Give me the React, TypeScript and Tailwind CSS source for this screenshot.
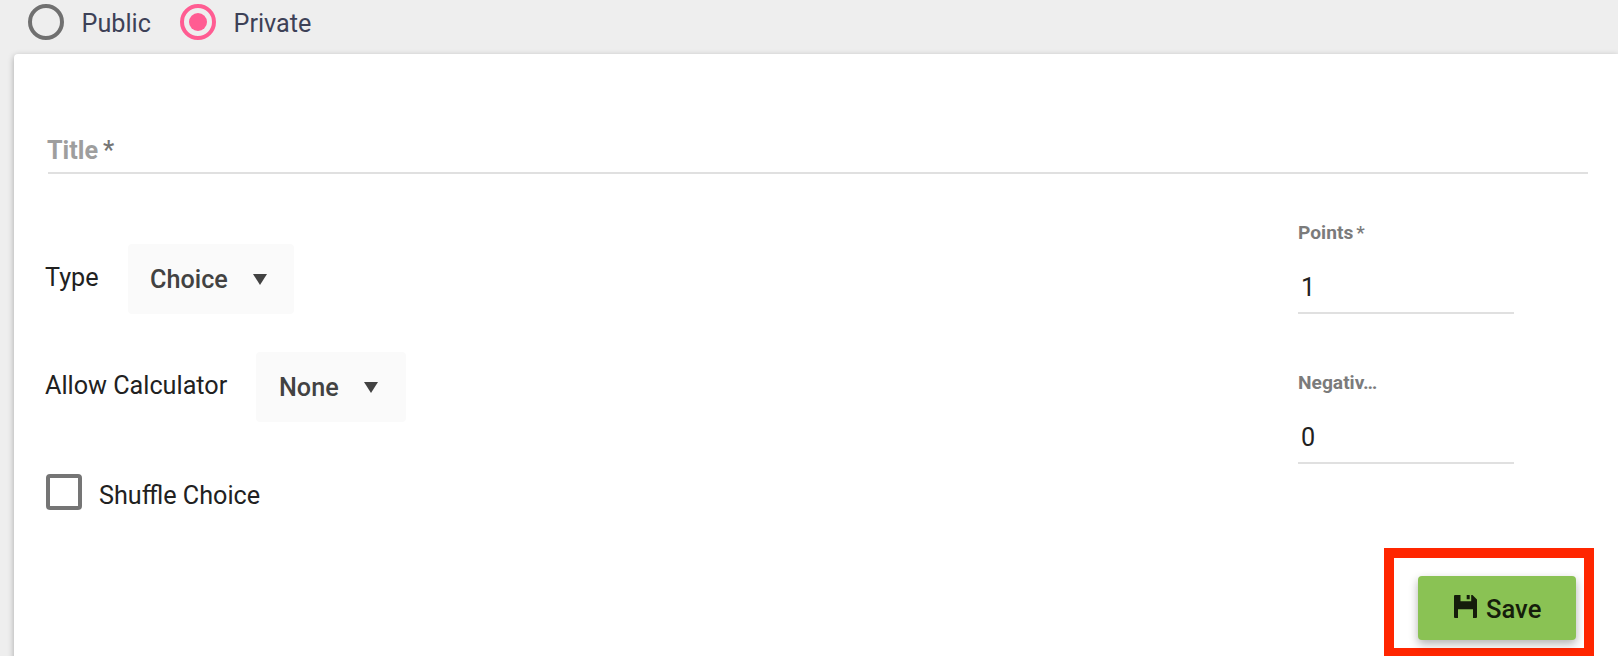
import type { ReactNode } from 'react';

const Radio = ({ label, checked }: { label: string; checked?: boolean }) => (
  <label className="flex items-center h-9">
    <span
      className={
        checked
          ? 'flex items-center justify-center size-9 rounded-full border-4 border-[#ff5c92]'
          : 'flex items-center justify-center size-9 rounded-full border-4 border-[#707070]'
      }
    >
      {checked && <span className="size-[18px] rounded-full bg-[#ff5c92]"></span>}
    </span>
    <span className="ml-[17.5px] pt-1 text-[#3d4157] leading-9">{label}</span>
  </label>
);

const Select = ({ value, className }: { value: string; className: string }) => (
  <button
    className={`flex items-center justify-between h-[70px] rounded-sm bg-[#fafafa] text-[#424242] font-medium ${className}`}
  >
    <span className="pt-0.5">{value}</span>
    <svg width="14" height="11" viewBox="0 0 14 11" fill="#424242">
      <path d="M0 0h14L7 11z" />
    </svg>
  </button>
);

const NumberField = ({ label, value }: { label: ReactNode; value: string }) => (
  <div className="w-[216px] h-[150px]">
    <div className="h-6 pt-px text-[19.2px] leading-6 font-bold text-[#7b7b7b]">{label}</div>
    <div className="h-[70px] pt-7 pl-[3px] leading-8 border-b-2 border-[#e0e0e0]">{value}</div>
  </div>
);

const QuestionForm = () => {
  return (
    <div className="w-[1618px] h-[656px] overflow-hidden bg-[#eeeeee] font-[Roboto,sans-serif] text-[25.2px] text-[#212121]">
      <div className="flex h-[54px] pt-1 pl-7">
        <div className="w-[152px]">
          <Radio label="Public" />
        </div>
        <Radio label="Private" checked />
      </div>
      <div className="ml-3.5 h-[660px] rounded-tl bg-white shadow-[0_2px_6px_rgba(0,0,0,0.3)]">
        <div className="ml-[34px] w-[1540px] h-[120px] pt-[81px] leading-8 font-bold text-[#9e9e9e] border-b-2 border-[#e0e0e0]">
          <span className="-ml-px">Title</span>
          <span className="ml-[5px] text-[#757575] font-medium">*</span>
        </div>
        <div className="flex justify-between h-[374px] pl-8">
          <div className="pt-[70px]">
            <div className="flex items-center h-[70px]">
              <span className="w-[82px] pb-[3px] -indent-px">Type</span>
              <Select value="Choice" className="w-[166px] pl-[22px] pr-[27px]" />
            </div>
            <div className="flex items-center h-[70px] mt-[38px]">
              <span className="w-[210px] pb-[3px] -indent-px">Allow Calculator</span>
              <Select value="None" className="w-[150px] pl-[23px] pr-7" />
            </div>
            <div className="flex mt-[52px]">
              <span className="size-9 rounded border-4 border-[#757575]"></span>
              <span className="ml-[17px] mt-1 leading-9">Shuffle Choice</span>
            </div>
          </div>
          <div className="pt-[46px] pr-[104px]">
            <NumberField
              label={
                <>
                  Points<span className="ml-[3px] font-medium">*</span>
                </>
              }
              value="1"
            />
            <NumberField label="Negativ…" value="0" />
          </div>
        </div>
        <div className="w-[210px] h-[110px] ml-[1370px] pt-[18px] pl-6 border-[10px] border-[#ff2600]">
          <button className="flex items-center w-[158px] h-16 pl-9 rounded bg-[#8ac254] text-[#151d0b] font-medium shadow-[0_4px_10px_rgba(0,0,0,0.3)]">
            <svg width="23" height="23" viewBox="0 0 23 23" fill="currentColor" className="mb-1">
              <path d="M.7 0H6.500v6.300h10.700V0h1.300L23 4.500V22.300l-.7.700H19v-8.700H4V23H.7l-.7-.7V.7zM12.700 0h3v4.300h-3z" />
            </svg>
            <span className="ml-[9px] pt-[3px] text-[25.6px]">Save</span>
          </button>
        </div>
      </div>
    </div>
  );
};

export default QuestionForm;
